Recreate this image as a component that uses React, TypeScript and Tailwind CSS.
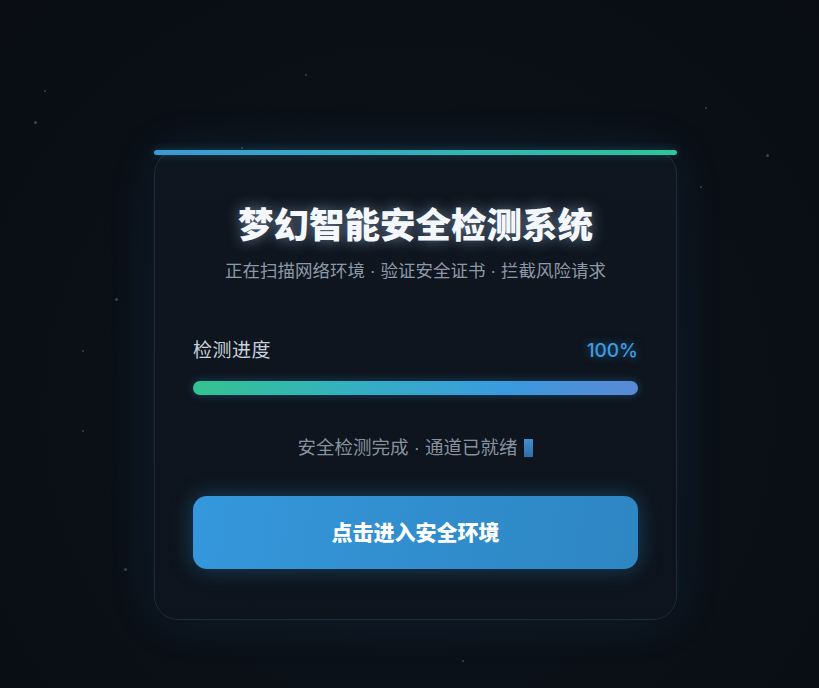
import React from 'react';

const stars: [number, number, number][] = [
  [305, 74, 2],
  [44, 90, 2],
  [34, 121, 3],
  [241, 147, 2],
  [766, 154, 3],
  [700, 186, 2],
  [705, 107, 2],
  [115, 298, 3],
  [82, 350, 2],
  [82, 430, 2],
  [124, 568, 3],
  [462, 660, 2],
];

const App: React.FC = () => {
  return (
    <div className="relative min-h-[688px] w-full overflow-hidden bg-[radial-gradient(ellipse_at_50%_60%,#0e1720_0%,#0b1118_45%,#090d13_100%)] font-['Liberation_Sans','Noto_Sans_CJK_SC',sans-serif]">
      {/* background stars */}
      {stars.map(([x, y, s], i) => (
        <span
          key={i}
          className="absolute rounded-full bg-[#4a5a6a] opacity-70"
          style={{ left: x, top: y, width: s, height: s }}
        />
      ))}

      <div className="flex justify-center pl-3 pt-[150px]">
        <div className="relative w-[523px] rounded-[24px] border border-[#1d2b39] bg-[linear-gradient(180deg,#0f161f_0%,#0d141d_100%)] px-[38px] pb-[50px] pt-[54px] shadow-[0_0_50px_rgba(40,120,200,0.12)]">
          {/* top accent bar */}
          <div className="absolute -left-px -right-px -top-px h-[5px] rounded-full bg-[linear-gradient(90deg,#3a98d8_0%,#33b3b8_55%,#2ec597_100%)] shadow-[0_0_10px_rgba(50,170,200,0.35)]" />

          <h1 className="text-center text-[35.5px] font-black leading-[42px] text-[#f4f8fc] [text-shadow:0_0_14px_rgba(190,220,255,0.5)]">
            梦幻智能安全检测系统
          </h1>
          <p className="mt-3 text-center text-[17.5px] leading-[24px] text-[#8e99a7]">
            正在扫描网络环境 · 验证安全证书 · 拦截风险请求
          </p>

          <div className="mt-[56px] flex items-center justify-between">
            <span className="text-[19px] leading-[24px] tracking-[0.5px] text-[#c9d1db]">检测进度</span>
            <span className="font-['Inter',sans-serif] text-[19px] font-medium leading-[24px] text-[#3d9de2] [text-shadow:0_0_10px_rgba(60,157,226,0.5)]">
              100%
            </span>
          </div>

          <div className="mt-[18px] h-[14px] w-full rounded-full bg-[#16202b]">
            <div className="h-full w-full rounded-full bg-[linear-gradient(90deg,#33c390_0%,#35b0c0_35%,#3a9be0_70%,#5a89d4_100%)] shadow-[0_0_10px_rgba(58,155,224,0.35)]" />
          </div>

          <div className="mt-[41px] flex items-center justify-center gap-[7px]">
            <span className="text-[18.5px] leading-[24px] text-[#88929f]">安全检测完成 · 通道已就绪</span>
            <span className="h-[18px] w-[9px] bg-[linear-gradient(180deg,#3f8fd0,#2f6fa8)]" />
          </div>

          <button className="mt-[36px] flex h-[73px] w-full items-center justify-center rounded-[14px] bg-[linear-gradient(100deg,#3598dc_0%,#318dcd_55%,#2e86c2_100%)] text-[21px] font-black text-white shadow-[0_0_22px_rgba(52,152,219,0.35)]">
            点击进入安全环境
          </button>
        </div>
      </div>
    </div>
  );
};

export default App;
